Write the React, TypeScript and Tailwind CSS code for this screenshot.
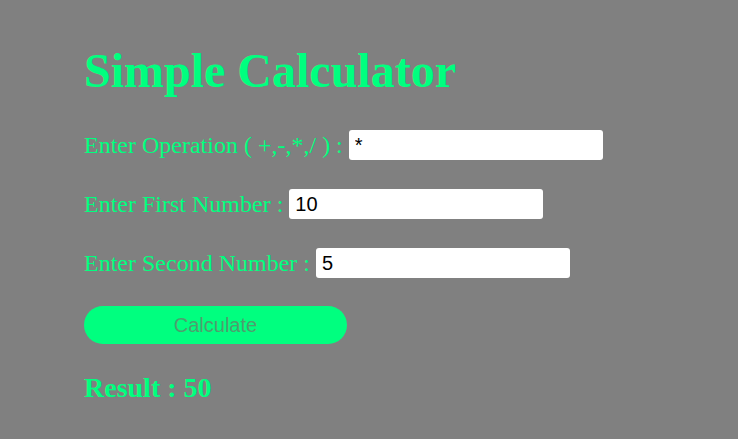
import React from 'react';

const serif = { fontFamily: '"Liberation Serif", "Times New Roman", serif' };

const Row: React.FC<{ label: string; value: string; className?: string }> = ({ label, value, className }) => {
  return (
    <div className={`flex items-center h-[30px] ${className ?? ''}`}>
      <label className="text-[24px] leading-[30px] text-[#00ff7f] whitespace-pre">{label} </label>
      <input
        defaultValue={value}
        className="w-[254px] h-[30px] rounded-[3px] bg-white px-[6px] text-[20px] text-black outline-none font-['Liberation_Sans',Arial,sans-serif]"
      />
    </div>
  );
};

const App: React.FC = () => {
  return (
    <div className="w-[738px] h-[439px] bg-[#808080] overflow-hidden" style={serif}>
      <div className="pl-[84px] pt-[47px]">
        {/* Title */}
        <h1 className="text-[48px] leading-[48px] font-bold text-[#00ff7f]">Simple Calculator</h1>

        {/* Inputs */}
        <Row label="Enter Operation ( +,-,*,/ ) :" value="*" className="mt-[35px]" />
        <Row label="Enter First Number :" value="10" className="mt-[29px]" />
        <Row label="Enter Second Number :" value="5" className="mt-[29px]" />

        {/* Button */}
        <button className="mt-[28px] w-[263px] h-[38px] rounded-full bg-[#00ff7f] text-[20px] text-[#4e9e6e] font-['Liberation_Sans',Arial,sans-serif]">
          Calculate
        </button>

        {/* Result */}
        <h2 className="mt-[30px] text-[28px] leading-[28px] font-bold text-[#00ff7f]">Result : 50</h2>
      </div>
    </div>
  );
};

export default App;
